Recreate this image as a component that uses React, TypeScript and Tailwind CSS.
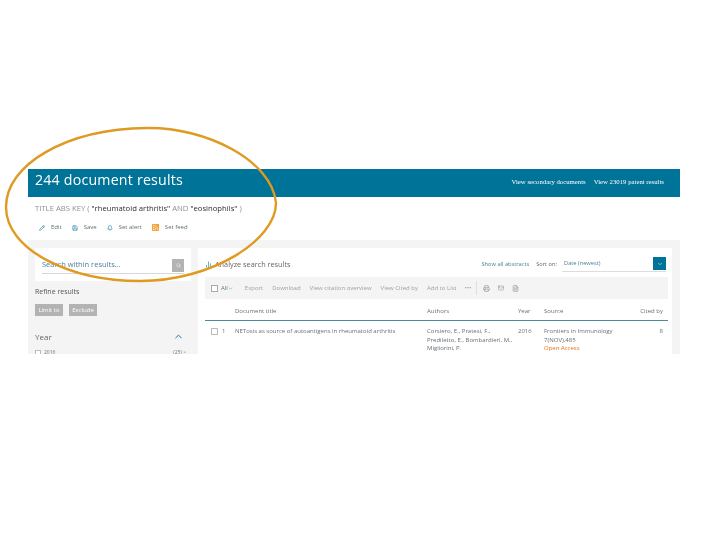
import { ChevronDown, ChevronUp, Search, Pencil, Save, Bell, Rss, BarChart2, Printer, Mail, FileText } from 'lucide-react';

const toolbarLinks = ['Export', 'Download', 'View citation overview', 'View Cited by', 'Add to List'];

function ActionLink({ icon, label }: { icon: React.ReactNode; label: string }) {
  return (
    <span className="flex items-center gap-[6px] text-[6px] text-[#5f6f78]">
      {icon}
      {label}
    </span>
  );
}

export default function App() {
  return (
    <div className="relative h-[540px] w-[720px] overflow-hidden bg-white font-['Open_Sans',sans-serif]">
      <div className="ml-[28px] w-[652px] pt-[169px] blur-[0.45px]">
        {/* Results header */}
        <div className="flex h-[28px] items-center justify-between bg-[#007398] pl-[7px] pr-[16px] text-white">
          <h1 className="pb-[6px] text-[14.2px] leading-none tracking-[0.2px]">244 document results</h1>
          <div className="flex gap-[8px] pb-[2px] font-['Liberation_Serif',serif] text-[6.75px]">
            <span>View secondary documents</span>
            <span>View 23019 patent results</span>
          </div>
        </div>

        {/* Query and actions */}
        <div className="h-[43px] bg-white pl-[7px] pt-[6px]">
          <p className="text-[7.7px] leading-[10px] text-[#8a9197]">
            TITLE ABS KEY ( <span className="text-[#2e2e2e]">"rheumatoid arthritis"</span> AND{' '}
            <span className="text-[#2e2e2e]">"eosinophils"</span> )
          </p>
          <div className="mt-[10px] flex gap-[10px] pl-[4px]">
            <ActionLink icon={<Pencil className="h-[6px] w-[6px] text-[#007398]" />} label="Edit" />
            <ActionLink icon={<Save className="h-[6px] w-[6px] text-[#007398]" />} label="Save" />
            <ActionLink icon={<Bell className="h-[6px] w-[6px] text-[#007398]" />} label="Set alert" />
            <ActionLink icon={<Rss className="h-[7px] w-[7px] bg-[#f2a33a] text-white" />} label="Set feed" />
          </div>
        </div>

        {/* Sidebar and results */}
        <div className="flex h-[114px] gap-[7px] overflow-hidden bg-[#f4f4f4] pl-[7px] pr-[8px] pt-[8px]">
          <aside className="w-[156px] shrink-0">
            <div className="h-[33px] bg-white px-[7px] pt-[10px]">
              <div className="flex h-[16px] items-center justify-between border-b border-[#d8d8d8] pb-[1px]">
                <span className="text-[7.5px] text-[#4a7f98]">Search within results...</span>
                <span className="flex h-[13px] w-[12px] items-center justify-center bg-[#b3b3b3]">
                  <Search className="h-[5px] w-[5px] text-white" />
                </span>
              </div>
            </div>
            <p className="mt-[6px] text-[7px] leading-[10px] text-[#555]">Refine results</p>
            <div className="mt-[7px] flex gap-[6px]">
              <span className="flex h-[12px] w-[28px] items-center justify-center bg-[#b3b3b3] text-[6px] text-white">Limit to</span>
              <span className="flex h-[12px] w-[28px] items-center justify-center bg-[#b3b3b3] text-[6px] text-white">Exclude</span>
            </div>
            <div className="mt-[15px] flex items-center justify-between pr-[7px]">
              <span className="text-[8px] leading-[10px] text-[#666]">Year</span>
              <ChevronUp className="h-[11px] w-[11px] text-[#007398]" />
            </div>
            <div className="mt-[7px] flex items-center justify-between pr-[5px] text-[5px] text-[#777]">
              <span className="flex items-center gap-[3px]">
                <span className="h-[6px] w-[6px] border border-[#bbb] bg-white" />
                2016
              </span>
              <span>(25) &gt;</span>
            </div>
          </aside>

          <main className="min-w-0 flex-1 bg-white pl-[7px] pr-[4px]">
            <div className="flex h-[29px] items-center justify-between pr-[2px] pt-[3px]">
              <span className="flex items-center gap-[3px] text-[7.3px] text-[#666]">
                <BarChart2 className="h-[7px] w-[7px] text-[#007398]" />
                Analyze search results
              </span>
              <div className="flex items-center text-[5.7px]">
                <span className="text-[#4a7f98]">Show all abstracts</span>
                <span className="ml-[7px] text-[#666]">Sort on:</span>
                <span className="ml-[5px] flex h-[16px] w-[104px] items-center justify-between border-b border-[#ddd] pl-[2px] text-[#4a7f98]">
                  Date (newest)
                  <span className="flex h-[13px] w-[13px] items-center justify-center bg-[#007398]">
                    <ChevronDown className="h-[6px] w-[6px] text-white" />
                  </span>
                </span>
              </div>
            </div>

            <div className="flex h-[22px] items-center bg-[#f4f4f4] pl-[6px] text-[6px] text-[#9aa3a8]">
              <span className="h-[7px] w-[7px] border border-[#aaa] bg-white" />
              <span className="ml-[3px] flex items-center text-[#4a7f98]">
                All
                <ChevronDown className="h-[5px] w-[5px]" />
              </span>
              <div className="ml-[12px] flex gap-[9px] whitespace-nowrap">
                {toolbarLinks.map((link) => (
                  <span key={link}>{link}</span>
                ))}
              </div>
              <span className="ml-[8px]">•••</span>
              <span className="ml-[5px] h-[14px] w-px bg-[#ddd]" />
              <div className="ml-[6px] flex gap-[8px] text-[#8a9197]">
                <Printer className="h-[7px] w-[7px]" />
                <Mail className="h-[6px] w-[6px]" />
                <FileText className="h-[7px] w-[7px]" />
              </div>
            </div>

            <div className="grid grid-cols-[30px_192px_91px_26px_90px_34px] text-[6px] text-[#6a7075]">
              <div className="col-span-6 grid h-[22px] grid-cols-subgrid items-center border-b border-[#4d8a9f] pt-[3px]">
                <span />
                <span>Document title</span>
                <span>Authors</span>
                <span>Year</span>
                <span>Source</span>
                <span className="pr-[5px] text-right">Cited by</span>
              </div>
              <div className="col-span-6 grid grid-cols-subgrid pt-[6px] leading-[8.5px]">
                <span className="flex items-start gap-[4px] pl-[6px]">
                  <span className="mt-[1px] h-[7px] w-[7px] border border-[#bbb]" />1
                </span>
                <span className="whitespace-nowrap">NETosis as source of autoantigens in rheumatoid arthritis</span>
                <span className="whitespace-nowrap">
                  Corsiero, E., Pratesi, F.,
                  <br />
                  Prediletto, E., Bombardieri, M.,
                  <br />
                  Migliorini, P.
                </span>
                <span>2016</span>
                <span>
                  Frontiers in Immunology
                  <br />
                  7(NOV),485
                  <br />
                  <span className="text-[#e9711c]">Open Access</span>
                </span>
                <span className="pr-[5px] text-right">8</span>
              </div>
            </div>
          </main>
        </div>
      </div>

      {/* Hand drawn highlight */}
      <svg className="absolute left-0 top-0" width="720" height="540" viewBox="0 0 720 540" fill="none">
        <path
          d="M6 207 C6 165 65 129 147 128 C205 127 272 160 276 203 C276 240 212 281 140 281 C70 281 6 250 6 207 Z"
          stroke="#e09a22"
          strokeWidth="2.4"
        />
      </svg>
    </div>
  );
}
